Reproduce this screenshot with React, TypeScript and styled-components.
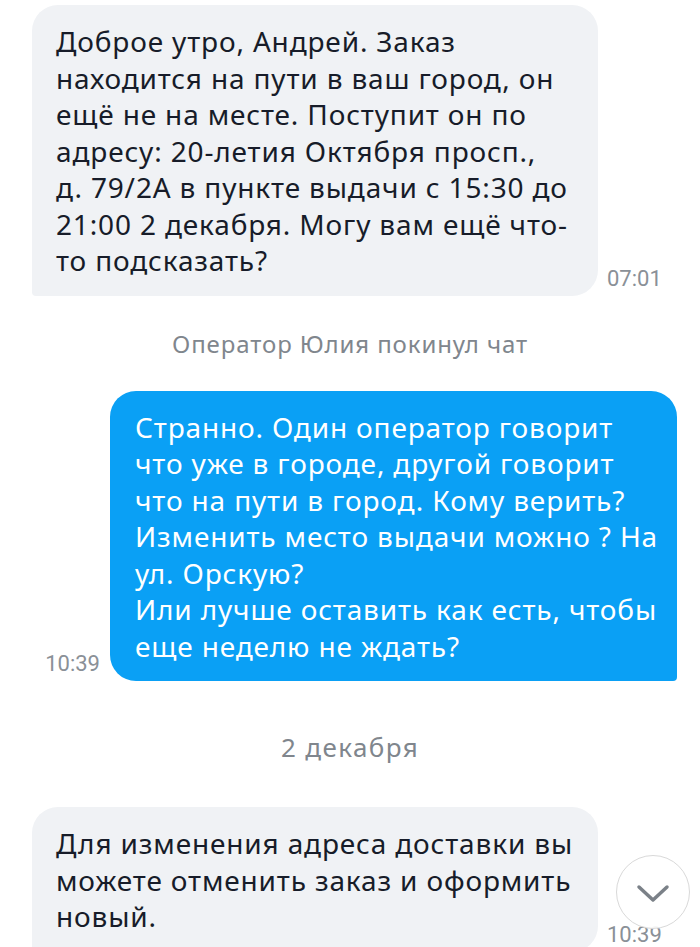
import React from "react";
import styled, { createGlobalStyle } from "styled-components";

const GlobalStyle = createGlobalStyle`
  html, body {
    margin: 0;
    padding: 0;
    background: #ffffff;
    overflow: hidden;
  }
  * { box-sizing: border-box; }
`;

const Screen = styled.div`
  position: relative;
  width: 700px;
  height: 947px;
  overflow: hidden;
  background: #ffffff;
  display: flex;
  flex-direction: column;
  padding-top: 5px;
  font-family: "Noto Sans", "DejaVu Sans", sans-serif;
`;

const MessageRow = styled.div<{ $side: "in" | "out"; $mt?: number }>`
  display: flex;
  align-items: flex-end;
  flex-direction: ${(p) => (p.$side === "in" ? "row" : "row-reverse")};
  gap: ${(p) => (p.$side === "in" ? "9px" : "10px")};
  padding-left: ${(p) => (p.$side === "in" ? "32px" : "0")};
  padding-right: ${(p) => (p.$side === "in" ? "0" : "23px")};
  margin-top: ${(p) => p.$mt ?? 0}px;
`;

const Bubble = styled.div<{ $side: "in" | "out" }>`
  width: ${(p) => (p.$side === "in" ? "566px" : "567px")};
  padding: 18px 12px 17px ${(p) => (p.$side === "in" ? "24px" : "25px")};
  background: ${(p) => (p.$side === "in" ? "#f0f2f5" : "#0aa0f5")};
  color: ${(p) => (p.$side === "in" ? "#171c29" : "#ffffff")};
  border-radius: ${(p) =>
    p.$side === "in" ? "26px 26px 26px 4px" : "26px 26px 4px 26px"};
  font-size: 28px;
  line-height: 36.5px;
  letter-spacing: 0.85px;
`;

const Line = styled.span`
  display: block;
  white-space: nowrap;
`;

const Time = styled.span`
  font-family: Roboto, "Liberation Sans", sans-serif;
  font-size: 22px;
  line-height: 26px;
  color: #8a9097;
  margin-bottom: 4px;
  white-space: nowrap;
`;

const CenterNote = styled.div<{ $mt: number; $size: number; $ls: number }>`
  margin-top: ${(p) => p.$mt}px;
  text-align: center;
  font-size: ${(p) => p.$size}px;
  line-height: 30px;
  color: #80868d;
  letter-spacing: ${(p) => p.$ls}px;
`;

const ScrollButton = styled.button`
  position: absolute;
  left: 616px;
  top: 855px;
  width: 74px;
  height: 74px;
  border-radius: 50%;
  border: 1.5px solid #d9d9d9;
  background: rgba(255, 255, 255, 0.92);
  display: flex;
  align-items: center;
  justify-content: center;
  padding: 0;
  padding-top: 4px;
`;

const incoming1 = [
  "Доброе утро, Андрей. Заказ",
  "находится на пути в ваш город, он",
  "ещё не на месте. Поступит он по",
  "адресу: 20-летия Октября просп.,",
  "д. 79/2А в пункте выдачи с 15:30 до",
  "21:00 2 декабря. Могу вам ещё что-",
  "то подсказать?",
];

const outgoing1 = [
  "Странно. Один оператор говорит",
  "что уже в городе, другой говорит",
  "что на пути в город. Кому верить?",
  "Изменить место выдачи можно ? На",
  "ул. Орскую?",
  "Или лучше оставить как есть, чтобы",
  "еще неделю не ждать?",
];

const incoming2 = [
  "Для изменения адреса доставки вы",
  "можете отменить заказ и оформить",
  "новый.",
];

const Message = ({
  side,
  lines,
  time,
  mt,
}: {
  side: "in" | "out";
  lines: string[];
  time: string;
  mt?: number;
}) => (
  <MessageRow $side={side} $mt={mt}>
    <Bubble $side={side}>
      {lines.map((l, i) => (
        <Line key={i}>{l}</Line>
      ))}
    </Bubble>
    <Time>{time}</Time>
  </MessageRow>
);

export default function App() {
  return (
    <>
      <GlobalStyle />
      <Screen>
        <Message side="in" lines={incoming1} time="07:01" />
        <CenterNote $mt={33} $size={24} $ls={0.9}>
          Оператор Юлия покинул чат
        </CenterNote>
        <Message side="out" lines={outgoing1} time="10:39" mt={32} />
        <CenterNote $mt={51} $size={26} $ls={1.4}>
          2 декабря
        </CenterNote>
        <Message side="in" lines={incoming2} time="10:39" mt={45} />
        <ScrollButton aria-label="scroll down">
          <svg width="34" height="20" viewBox="0 0 34 20" fill="none">
            <path
              d="M3 3 L17 16 L31 3"
              stroke="#7b8188"
              strokeWidth="3.5"
              strokeLinecap="round"
              strokeLinejoin="round"
            />
          </svg>
        </ScrollButton>
      </Screen>
    </>
  );
}
